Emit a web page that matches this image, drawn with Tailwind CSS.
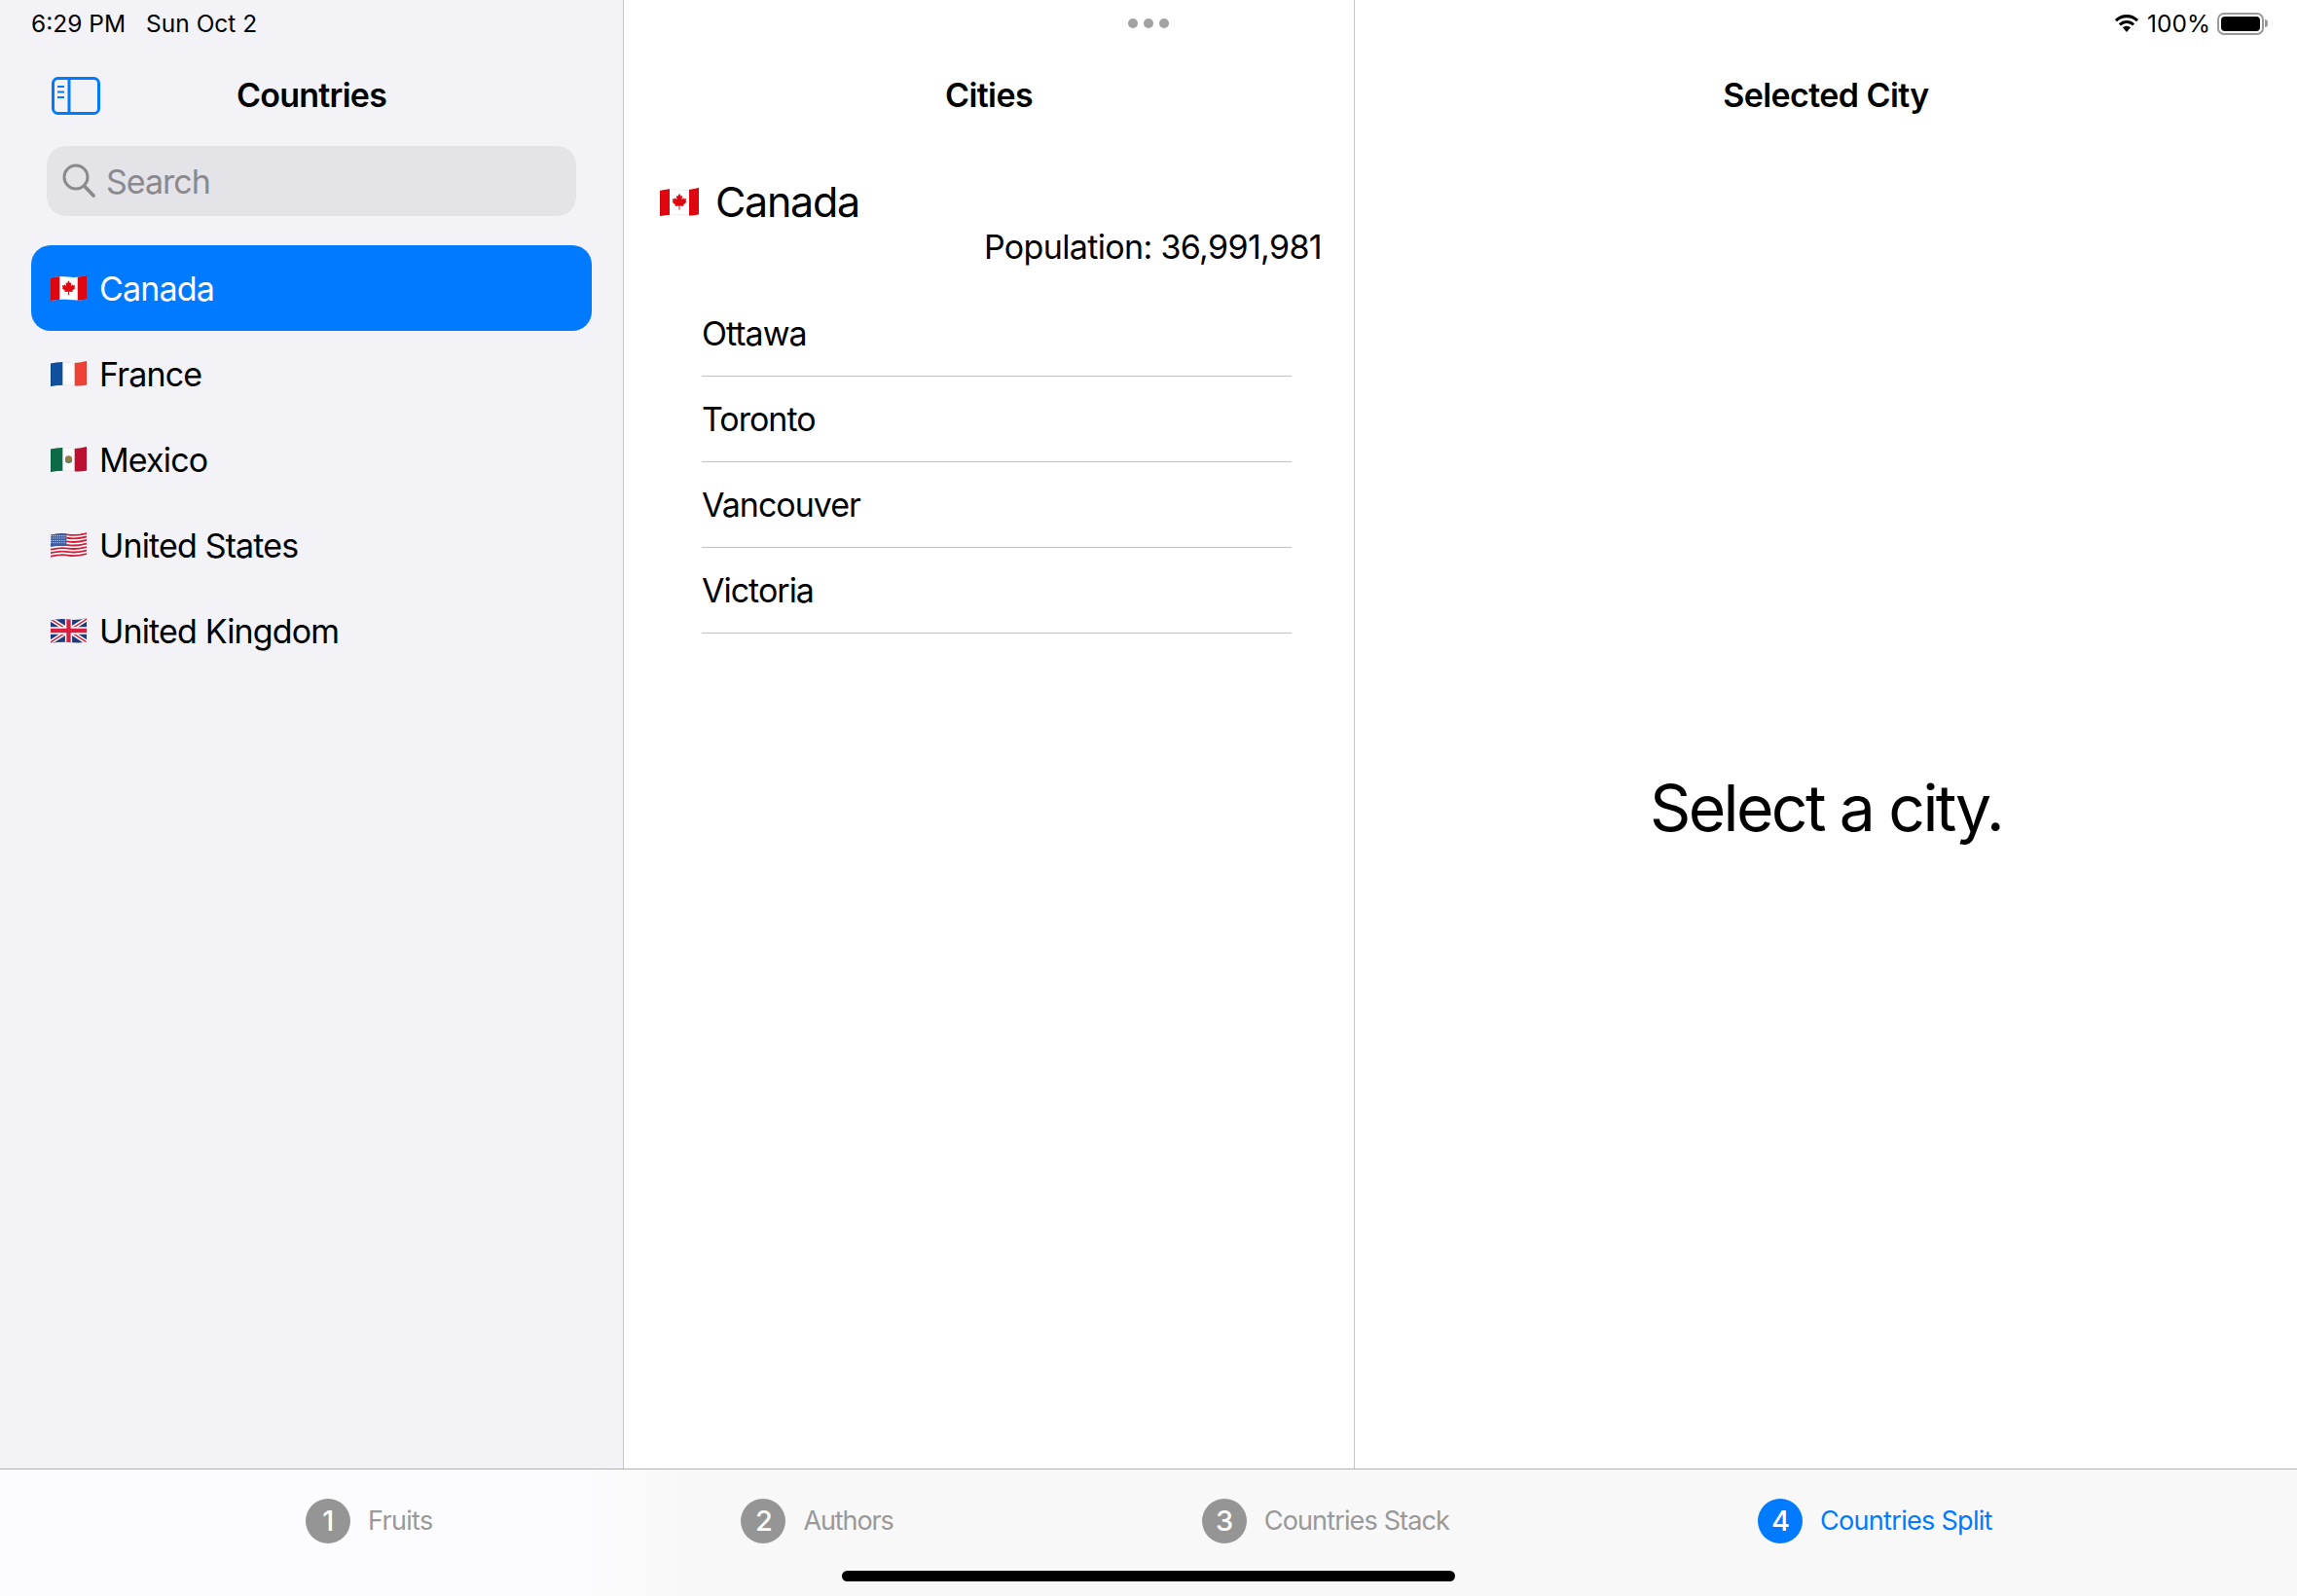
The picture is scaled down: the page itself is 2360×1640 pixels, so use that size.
<!DOCTYPE html>
<html lang="en">

<head>
    <meta charset="UTF-8">
    <meta name="viewport" content="width=device-width, initial-scale=1.0">
    <script src="https://cdn.jsdelivr.net/npm/@tailwindcss/browser@4"></script>
    <title>Countries</title>
</head>

<body class="relative w-[2360px] h-[1640px] overflow-hidden bg-white text-black font-['Inter','Liberation_Sans',sans-serif]">

    <!-- flag artwork, reused below -->
    <svg class="absolute w-0 h-0" aria-hidden="true">
        <defs>
            <path id="wave-edge" d="M0 2.500C6 1 12 .5 18 1.500S30 1.500 36 0V23.500C30 25 24 24.500 18 24S6 24 0 25Z" fill="none" stroke="#000" stroke-opacity=".18" stroke-width=".7" />
            <clipPath id="wave">
                <path d="M0 2.500C6 1 12 .5 18 1.500S30 1.500 36 0V23.500C30 25 24 24.500 18 24S6 24 0 25Z" />
            </clipPath>
            <symbol id="flag-ca" viewBox="0 0 36 25" preserveAspectRatio="none">
                <g clip-path="url(#wave)">
                    <rect width="36" height="25" fill="#fff" />
                    <rect width="9" height="25" fill="#e0060f" />
                    <rect x="27" width="9" height="25" fill="#e0060f" />
                    <polygon fill="#e0060f" points="18,5 19.4,7.6 20.8,6.9 20.3,10.5 22,8.8 22.6,10 24.5,9.7 23.8,12 24.7,12.6 21.6,15.2 22,16.4 18.4,16 18.5,19.3 17.5,19.3 17.6,16 14,16.4 14.4,15.2 11.3,12.6 12.2,12 11.5,9.7 13.4,10 14,8.8 15.7,10.5 15.2,6.9 16.6,7.6" />
                    <use href="#wave-edge" />
                </g>
            </symbol>
            <symbol id="flag-fr" viewBox="0 0 36 25" preserveAspectRatio="none">
                <g clip-path="url(#wave)">
                    <rect width="36" height="25" fill="#fdfdff" />
                    <rect width="12" height="25" fill="#0f4f9c" />
                    <rect x="24" width="12" height="25" fill="#ee4136" />
                    <use href="#wave-edge" />
                </g>
            </symbol>
            <symbol id="flag-mx" viewBox="0 0 36 25" preserveAspectRatio="none">
                <g clip-path="url(#wave)">
                    <rect width="36" height="25" fill="#fdfdfd" />
                    <rect width="12" height="25" fill="#0b6b47" />
                    <rect x="24" width="12" height="25" fill="#bd1030" />
                    <circle cx="18" cy="12.500" r="3.600" fill="#9a7a45" />
                    <path d="M15 14.500q3 2.500 6 0" fill="none" stroke="#3f8a5a" stroke-width="1.200" />
                    <use href="#wave-edge" />
                </g>
            </symbol>
            <symbol id="flag-us" viewBox="0 0 36 25" preserveAspectRatio="none">
                <g clip-path="url(#wave)">
                    <rect width="36" height="25" fill="#fdfdfd" />
                    <g fill="none" stroke="#d11f3a" stroke-width="1.800">
                        <path d="M0 3.400c6-1.500 12-2 18-1s12 0 18-1.500" />
                        <path d="M0 6.800c6-1.500 12-2 18-1s12 0 18-1.500" />
                        <path d="M0 10.200c6-1.500 12-2 18-1s12 0 18-1.500" />
                        <path d="M0 13.600c6-1.500 12-2 18-1s12 0 18-1.500" />
                        <path d="M0 17c6-1.500 12-2 18-1s12 0 18-1.500" />
                        <path d="M0 20.400c6-1.500 12-2 18-1s12 0 18-1.500" />
                        <path d="M0 23.800c6-1.500 12-2 18-1s12 0 18-1.500" />
                    </g>
                    <rect width="16" height="13.500" fill="#3c5a9e" />
                    <g fill="none" stroke="#dfe6f5" stroke-width="1" stroke-dasharray="1 1.200">
                        <path d="M0 3.500h16M0 5.800h16M0 8.100h16M0 10.400h16" />
                    </g>
                </g>
            </symbol>
            <symbol id="flag-gb" viewBox="0 0 36 25" preserveAspectRatio="none">
                <g clip-path="url(#wave)">
                    <rect width="36" height="25" fill="#1f3a7d" />
                    <path d="M0 1L36 24M36 1L0 24" stroke="#fff" stroke-width="4.400" />
                    <path d="M0 1L36 24M36 1L0 24" stroke="#d7203f" stroke-width="1.400" />
                    <path d="M18 0V25M0 12.500H36" stroke="#fff" stroke-width="7" />
                    <path d="M18 0V25M0 12.500H36" stroke="#d7203f" stroke-width="4.200" />
                </g>
            </symbol>
        </defs>
    </svg>

    <div class="flex flex-col h-full">
        <main class="flex h-[1509px]">

            <!-- countries -->
            <aside class="w-[641px] shrink-0 bg-[#f2f2f7] border-r border-[#c6c6c8]">
                <header class="relative h-[150px] pt-12 flex items-center justify-center">
                    <svg class="absolute left-[53px] top-[79px]" width="50" height="39" viewBox="0 0 50 39" fill="none" stroke="#007aff">
                        <rect x="1.500" y="1.500" width="47" height="36" rx="5" stroke-width="3" />
                        <path d="M18 1.500v36" stroke-width="3" />
                        <path d="M6 10h7M6 15.500h7M6 21h7" stroke-width="2.200" />
                    </svg>
                    <h1 class="text-[34px] font-semibold tracking-[-0.75px] -mt-1">Countries</h1>
                </header>
                <div class="mx-12 h-[72px] rounded-[20px] bg-[#e3e3e8] flex items-center pl-4 gap-[11px] text-[#8a8a8e]">
                    <svg width="34" height="36" viewBox="0 0 34 36" fill="none" stroke="#8a8a8e" stroke-width="3" stroke-linecap="round">
                        <circle cx="14" cy="14" r="12" />
                        <path d="M23 23.500L32 33" stroke-width="3.600" />
                    </svg>
                    <span class="text-[34px] tracking-[-1px]">Search</span>
                </div>
                <ul class="mx-8 mt-[30px] text-[34px] tracking-[-0.85px]">
                    <li class="h-[88px] rounded-[20px] bg-[#007aff] text-white flex items-center pl-5 gap-[13px]">
                        <svg class="w-[37px] h-[26px]"><use href="#flag-ca" /></svg>Canada
                    </li>
                    <li class="h-[88px] flex items-center pl-5 gap-[13px]">
                        <svg class="w-[37px] h-[26px]"><use href="#flag-fr" /></svg>France
                    </li>
                    <li class="h-[88px] flex items-center pl-5 gap-[13px]">
                        <svg class="w-[37px] h-[26px]"><use href="#flag-mx" /></svg>Mexico
                    </li>
                    <li class="h-[88px] flex items-center pl-5 gap-[13px]">
                        <svg class="w-[37px] h-[26px]"><use href="#flag-us" /></svg>United States
                    </li>
                    <li class="h-[88px] flex items-center pl-5 gap-[13px]">
                        <svg class="w-[37px] h-[26px]"><use href="#flag-gb" /></svg>United Kingdom
                    </li>
                </ul>
            </aside>

            <!-- cities -->
            <section class="w-[751px] shrink-0 border-r border-[#c6c6c8]">
                <header class="h-[148px] pt-12 flex items-center justify-center">
                    <h2 class="text-[34px] font-semibold tracking-[-0.6px] -mt-0.5">Cities</h2>
                </header>
                <div class="h-[60px] mt-[29px] pl-[37px] flex items-center gap-[17px] text-[43px] tracking-[-1.3px]">
                    <svg class="w-10 h-[29px]"><use href="#flag-ca" /></svg>Canada
                </div>
                <p class="h-10 -mt-1 pr-[33px] flex items-center justify-end text-[34px] tracking-[-0.65px]">Population: 36,991,981</p>
                <ul class="mt-[26px] ml-20 mr-16 text-[34px] tracking-[-1px]">
                    <li class="h-[88px] flex items-center border-b border-[#c6c6c8]">Ottawa</li>
                    <li class="h-[88px] flex items-center border-b border-[#c6c6c8]">Toronto</li>
                    <li class="h-[88px] flex items-center border-b border-[#c6c6c8]">Vancouver</li>
                    <li class="h-[88px] flex items-center border-b border-[#c6c6c8]">Victoria</li>
                </ul>
            </section>

            <!-- selected city -->
            <section class="flex-1 flex flex-col">
                <header class="h-[148px] pt-12 flex items-center justify-center">
                    <h2 class="text-[34px] font-semibold tracking-[-0.6px] -mt-0.5">Selected City</h2>
                </header>
                <div class="flex-1 flex items-center justify-center pt-[3px]">
                    <p class="text-[66px] tracking-[-2.6px]">Select a city.</p>
                </div>
            </section>
        </main>

        <!-- tab bar -->
        <nav class="h-[131px] pb-6 pl-[314px] gap-[317px] border-t border-[#b2b2b2] bg-linear-to-r from-[#fcfcfe] from-25% to-[#f8f8f8] to-30% flex items-center text-[27px] tracking-[-0.7px] text-[#999999]">
            <div class="flex items-center gap-[18px]">
                <span class="w-[46px] h-[46px] rounded-full bg-[#959595] text-white text-[29px] font-medium flex items-center justify-center">1</span>Fruits
            </div>
            <div class="flex items-center gap-[18px] tracking-[-1.1px]">
                <span class="w-[46px] h-[46px] rounded-full bg-[#959595] text-white text-[29px] font-medium flex items-center justify-center">2</span>Authors
            </div>
            <div class="flex items-center gap-[18px] tracking-[-0.85px]">
                <span class="w-[46px] h-[46px] rounded-full bg-[#959595] text-white text-[29px] font-medium flex items-center justify-center">3</span>Countries Stack
            </div>
            <div class="flex items-center gap-[18px] text-[#007aff]">
                <span class="w-[46px] h-[46px] rounded-full bg-[#007aff] text-white text-[29px] font-medium flex items-center justify-center">4</span>Countries Split
            </div>
        </nav>
    </div>

    <!-- status bar sits over the columns -->
    <div class="absolute top-0 inset-x-0 h-12 px-8 grid grid-cols-[1fr_auto_1fr] items-center text-[24.5px]">
        <div class="flex gap-[21px]">
            <span>6:29 PM</span>
            <span>Sun Oct 2</span>
        </div>
        <div class="flex gap-1.5">
            <span class="w-2.5 h-2.5 rounded-full bg-[#a2a2a2]"></span>
            <span class="w-2.5 h-2.5 rounded-full bg-[#a2a2a2]"></span>
            <span class="w-2.5 h-2.5 rounded-full bg-[#a2a2a2]"></span>
        </div>
        <div class="flex items-center justify-end gap-[7px] -mr-0.5">
            <svg width="28" height="20" viewBox="0 0 28 20">
                <path d="M14 4.200c3.900 0 7.400 1.500 10 4l2.100-2.200C23 2.900 18.700 1 14 1S5 2.900 1.900 6L4 8.200c2.600-2.500 6.100-4 10-4z" />
                <path d="M14 10c2.300 0 4.400.9 6 2.400l2.100-2.200C20 8.100 17.100 6.900 14 6.900s-6 1.200-8.100 3.300L8 12.400C9.600 10.900 11.700 10 14 10z" />
                <path d="M14 12.700c-1.600 0-3 .6-4.100 1.600L14 19l4.100-4.700c-1.100-1-2.500-1.600-4.100-1.600z" />
            </svg>
            <span>100%</span>
            <span class="flex items-center">
                <span class="w-[48px] h-[23px] rounded-[7px] border-2 border-[#9a9a9a] p-[2px]">
                    <span class="block h-full rounded-[4px] bg-black"></span>
                </span>
                <span class="w-[3px] h-2 ml-px rounded-r-full bg-[#9a9a9a]"></span>
            </span>
        </div>
    </div>

    <!-- home indicator -->
    <div class="absolute left-[865px] top-[1614px] w-[630px] h-[11px] rounded-full bg-black"></div>

</body>

</html>
